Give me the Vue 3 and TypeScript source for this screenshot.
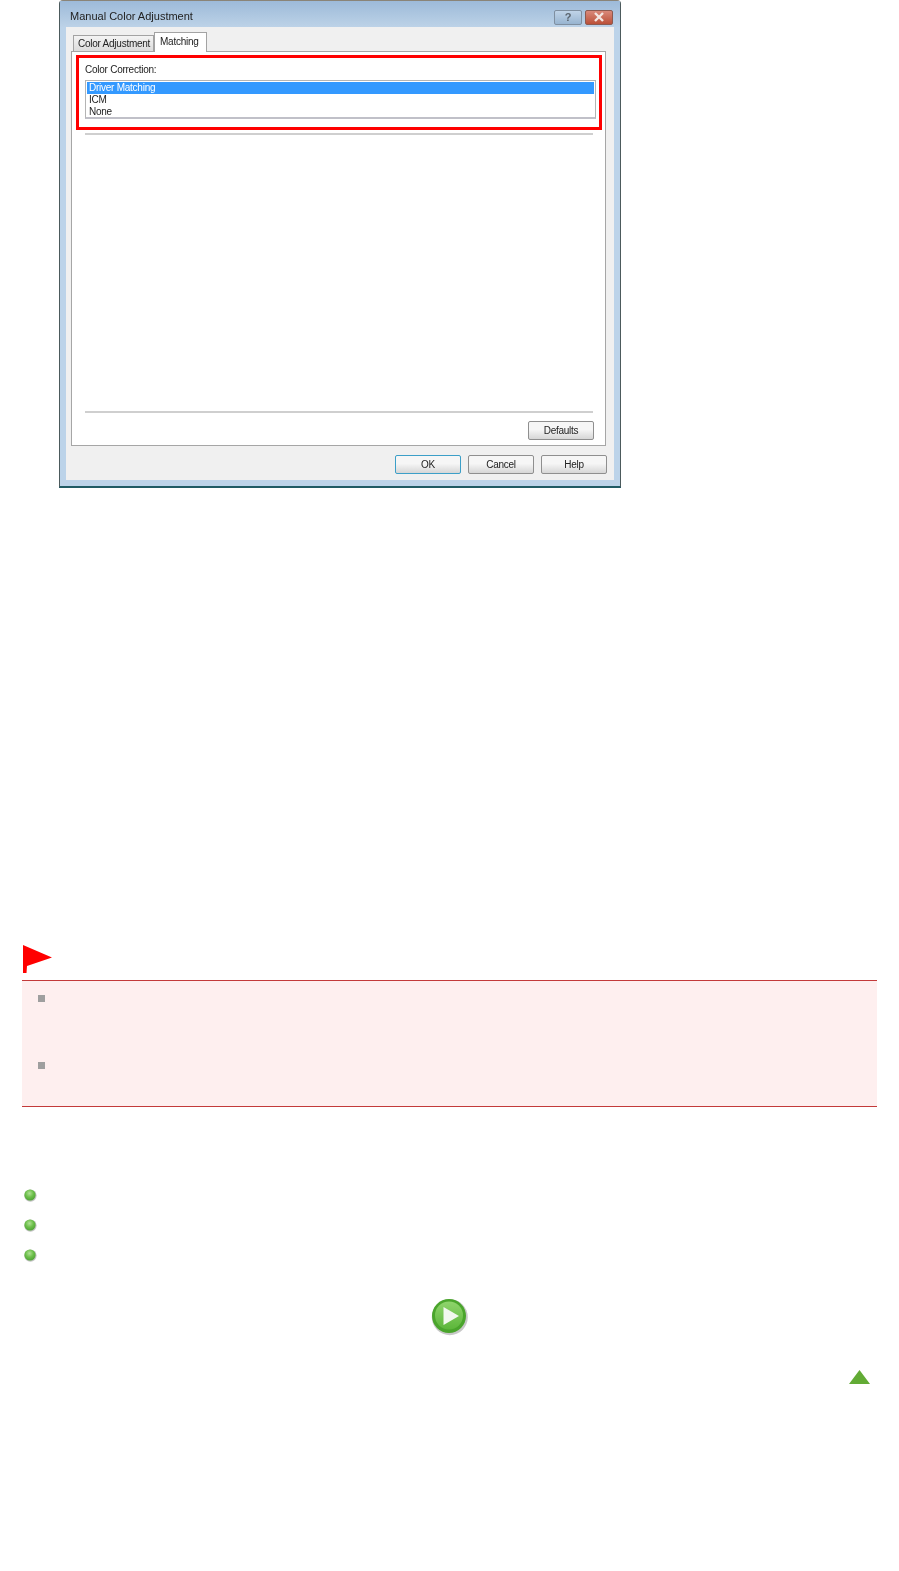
<script setup lang="ts">
const colorOptions = ['Driver Matching', 'ICM', 'None']
const dialogButtons = ['OK', 'Cancel', 'Help']
const links = [0, 1, 2]
</script>

<template>
  <div class="page">
    <div class="window">
      <div class="titlebar">
        <span class="title">Manual Color Adjustment</span>
        <div class="title-btn help-btn">?</div>
        <div class="title-btn close-btn">
          <svg width="14" height="10" viewBox="0 0 14 10">
            <path d="M3 1 L11 9 M11 1 L3 9" stroke="#f3e6e2" stroke-width="2.4" fill="none" />
          </svg>
        </div>
      </div>
      <div class="client">
        <div class="tabs">
          <div class="tab">Color Adjustment</div>
          <div class="tab active">Matching</div>
        </div>
        <div class="panel">
          <div class="highlight">
            <div class="field-label">Color Correction:</div>
            <div class="listbox">
              <div
                v-for="(opt, i) in colorOptions"
                :key="opt"
                class="list-row"
                :class="{ selected: i === 0 }"
              >{{ opt }}</div>
            </div>
          </div>
          <div class="sep sep-top"></div>
          <div class="spacer"></div>
          <div class="sep"></div>
          <div class="defaults-row">
            <div class="btn">Defaults</div>
          </div>
        </div>
        <div class="button-row">
          <div
            v-for="b in dialogButtons"
            :key="b"
            class="btn"
            :class="{ primary: b === 'OK' }"
          >{{ b }}</div>
        </div>
      </div>
    </div>

    <svg class="flag" width="32" height="30" viewBox="0 0 32 30">
      <path d="M1 1 L30 13.5 L5 22 L4.5 29 L1 29 Z" fill="#ff0000" />
    </svg>
    <div class="note">
      <div class="note-item"><span class="square"></span></div>
      <div class="note-item"><span class="square"></span></div>
    </div>

    <div class="links">
      <svg v-for="l in links" :key="l" class="ball" width="14" height="14" viewBox="0 0 14 14">
        <defs>
          <radialGradient :id="'ball' + l" cx="0.45" cy="0.35" r="0.7">
            <stop offset="0" stop-color="#b0e095" />
            <stop offset="0.5" stop-color="#6cbf4a" />
            <stop offset="1" stop-color="#4a9d33" />
          </radialGradient>
        </defs>
        <circle cx="7.4" cy="7.6" r="6.2" fill="#c4c4c4" />
        <circle cx="7" cy="7" r="5.6" :fill="'url(#ball' + l + ')'" />
      </svg>
    </div>

    <div class="next-row">
      <svg width="40" height="40" viewBox="0 0 40 40">
        <defs>
          <linearGradient id="playFill" x1="0" y1="0" x2="0" y2="1">
            <stop offset="0" stop-color="#8fd46c" />
            <stop offset="1" stop-color="#5cb63a" />
          </linearGradient>
        </defs>
        <circle cx="20.8" cy="21.2" r="18" fill="#c8c8c8" />
        <circle cx="20" cy="20" r="17" fill="#4aa52c" />
        <circle cx="20" cy="19.5" r="14" fill="url(#playFill)" />
        <path d="M14.5 11 L30 20 L14.5 29 Z" fill="#f2f8ee" />
      </svg>
    </div>

    <div class="top-row">
      <svg width="21" height="14" viewBox="0 0 21 14">
        <path d="M10.5 0 L21 14 L0 14 Z" fill="#62ab35" />
      </svg>
    </div>
  </div>
</template>

<style scoped>
.page {
  width: 899px;
  height: 1571px;
  background: #fff;
  overflow: hidden;
  font-family: "Liberation Sans", Arial, sans-serif;
  font-size: 10px;
  letter-spacing: -0.25px;
  color: #222;
}

.window {
  box-sizing: border-box;
  width: 562px;
  height: 488px;
  margin-left: 59px;
  padding: 0 6px 6px 6px;
  border: 1px solid #4c5a5c;
  border-bottom: 2px solid #1f5a64;
  border-top-color: #8a8478;
  border-radius: 4px 4px 0 0;
  background: #bcd3e9;
  filter: blur(0.6px);
}

.titlebar {
  height: 26px;
  display: flex;
  align-items: center;
  gap: 3px;
  background: linear-gradient(#9dbad9, #bcd2e7);
  margin: 0 -6px;
  padding: 0 7px 0 10px;
}

.title {
  flex: 1;
  padding-top: 4px;
  font-size: 11px;
  letter-spacing: 0;
  color: #222;
}

.title-btn {
  height: 15px;
  margin-top: 6px;
  border: 1px solid #7f8fa0;
  border-radius: 2px;
  display: flex;
  align-items: center;
  justify-content: center;
  box-sizing: border-box;
}

.help-btn {
  width: 28px;
  background: linear-gradient(#c0d4e8, #98b4d0);
  color: #5a646e;
  font-weight: 700;
  font-size: 11px;
}

.close-btn {
  width: 28px;
  border-color: #8c5a50;
  background: linear-gradient(#d9897a, #bb5038);
}

.client {
  box-sizing: border-box;
  height: 453px;
  background: #f0f0f0;
  padding: 5px 7px 0 5px;
  display: flex;
  flex-direction: column;
}

.tabs {
  height: 19px;
  display: flex;
  align-items: flex-end;
  padding-left: 2px;
  position: relative;
  z-index: 1;
}

.tab {
  box-sizing: border-box;
  width: 81px;
  height: 16px;
  padding: 0 4px;
  border: 1px solid #a3a3a3;
  border-bottom: none;
  background: linear-gradient(#f4f4f4, #dcdcdc);
  line-height: 15px;
  white-space: nowrap;
}

.tab.active {
  height: 20px;
  width: 53px;
  padding: 0 5px;
  background: #fff;
  line-height: 17px;
  margin-bottom: -1px;
}

.panel {
  box-sizing: border-box;
  width: 535px;
  height: 395px;
  border: 1px solid #a6a6a6;
  background: #fff;
  padding: 3px 3px 0 4px;
  display: flex;
  flex-direction: column;
}

.highlight {
  box-sizing: border-box;
  height: 75px;
  width: 526px;
  border: 3px solid #ff0000;
  padding: 5px 6px 0 6px;
}

.field-label {
  height: 17px;
  line-height: 14px;
}

.listbox {
  box-sizing: border-box;
  height: 39px;
  width: 511px;
  border: 1px solid #b4b4b4;
  border-bottom: 2px solid #c0c0c8;
  padding: 1px 1px 0 1px;
}

.list-row {
  height: 12px;
  line-height: 12px;
  padding-left: 2px;
}

.list-row.selected {
  background: #3399ff;
  color: #fff;
}

.sep {
  height: 2px;
  width: 508px;
  margin-left: 9px;
  background: #cfcfcf;
  flex-shrink: 0;
}

.sep-top {
  margin-top: 3px;
}

.spacer {
  flex: 1;
}

.defaults-row {
  height: 32px;
  padding: 8px 8px 0 0;
  box-sizing: border-box;
  display: flex;
  justify-content: flex-end;
  flex-shrink: 0;
}

.btn {
  box-sizing: border-box;
  width: 66px;
  height: 19px;
  border: 1px solid #8f8f8f;
  border-radius: 2px;
  background: linear-gradient(#f6f6f6 45%, #d6d6d6);
  display: flex;
  align-items: center;
  justify-content: center;
}

.btn.primary {
  border-color: #3c9fc8;
}

.button-row {
  display: flex;
  justify-content: flex-end;
  gap: 7px;
  margin-top: 9px;
}

.flag {
  display: block;
  margin: 456px 0 0 22px;
}

.note {
  box-sizing: border-box;
  width: 855px;
  height: 127px;
  margin: 6px 0 0 22px;
  border-top: 1px solid #c33a3a;
  border-bottom: 1px solid #c33a3a;
  background: #feefef;
  padding: 14px 0 0 16px;
}

.note-item {
  height: 67px;
}

.square {
  display: block;
  width: 7px;
  height: 7px;
  background: #9f9f9f;
}

.links {
  margin: 81px 0 0 23px;
  display: flex;
  flex-direction: column;
  gap: 16px;
}

.ball {
  display: block;
  filter: blur(0.7px);
}

.next-row {
  display: flex;
  justify-content: center;
  margin-top: 34px;
  padding-right: 1px;
}

.next-row svg {
  filter: blur(0.7px);
}

.top-row {
  display: flex;
  justify-content: flex-end;
  margin-top: 34px;
  padding-right: 29px;
}

.top-row svg {
  filter: blur(0.6px);
}
</style>

<style>
html,
body {
  margin: 0;
  background: #fff;
}
</style>
